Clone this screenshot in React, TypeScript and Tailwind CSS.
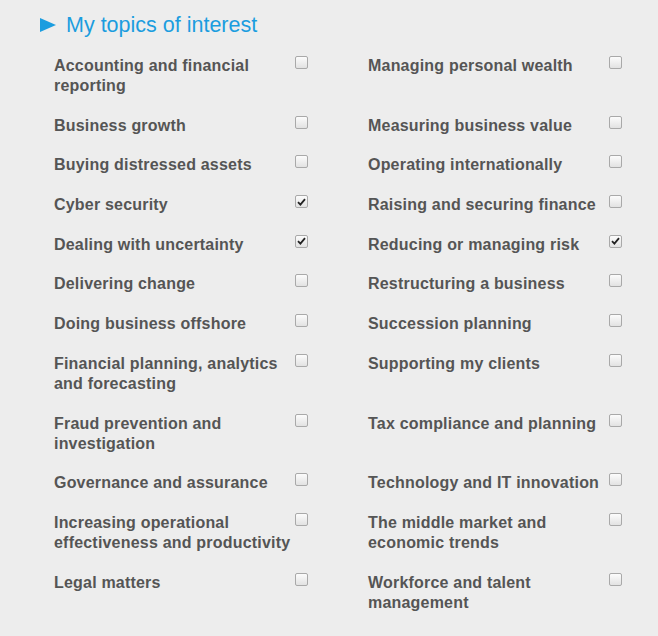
import React from 'react'

type Topic = { label: string; checked?: boolean }

const left: Topic[] = [
  { label: 'Accounting and financial reporting' },
  { label: 'Business growth' },
  { label: 'Buying distressed assets' },
  { label: 'Cyber security', checked: true },
  { label: 'Dealing with uncertainty', checked: true },
  { label: 'Delivering change' },
  { label: 'Doing business offshore' },
  { label: 'Financial planning, analytics and forecasting' },
  { label: 'Fraud prevention and investigation' },
  { label: 'Governance and assurance' },
  { label: 'Increasing operational effectiveness and productivity' },
  { label: 'Legal matters' },
]

const right: Topic[] = [
  { label: 'Managing personal wealth' },
  { label: 'Measuring business value' },
  { label: 'Operating internationally' },
  { label: 'Raising and securing finance' },
  { label: 'Reducing or managing risk', checked: true },
  { label: 'Restructuring a business' },
  { label: 'Succession planning' },
  { label: 'Supporting my clients' },
  { label: 'Tax compliance and planning' },
  { label: 'Technology and IT innovation' },
  { label: 'The middle market and economic trends' },
  { label: 'Workforce and talent management' },
]

const Checkbox = ({ checked }: { checked?: boolean }) => (
  <span className="flex h-[13px] w-[13px] shrink-0 items-center justify-center rounded-[2px] border border-[#a9a9a9] bg-gradient-to-b from-[#fcfcfc] to-[#e2e2e2]">
    {checked && (
      <svg width="9" height="8" viewBox="0 0 9 8">
        <path d="M1 4.2 L3.4 6.6 L8 1.2" fill="none" stroke="#222" strokeWidth="1.8" />
      </svg>
    )}
  </span>
)

const Item = ({ label, checked }: Topic) => (
  <div className="flex w-[314px] items-start">
    <span className="w-[241px] text-[16px] font-bold leading-[20px] tracking-[0.2px] text-[#555555]">{label}</span>
    <Checkbox checked={checked} />
  </div>
)

export default function App() {
  const rows = left.map((l, i) => [l, right[i]])
  return (
    <div className="min-h-[636px] w-full bg-[#ededed] pt-[11px]" style={{ fontFamily: '"Liberation Sans", Arial, sans-serif' }}>
      <div className="flex items-center pl-[40px]">
        <svg width="16" height="16" viewBox="0 0 16 16">
          <polygon points="0,1 16,8 0,15" fill="#1b9ddf" />
        </svg>
        <h2 className="ml-[10px] text-[21.5px] leading-[28px] text-[#1b9ddf]">My topics of interest</h2>
      </div>
      <div className="mt-[17px] grid grid-cols-[314px_314px] gap-y-[19.7px] pl-[54px]">
        {rows.map(([a, b]) => (
          <React.Fragment key={a.label}>
            <Item {...a} />
            <Item {...b} />
          </React.Fragment>
        ))}
      </div>
    </div>
  )
}
